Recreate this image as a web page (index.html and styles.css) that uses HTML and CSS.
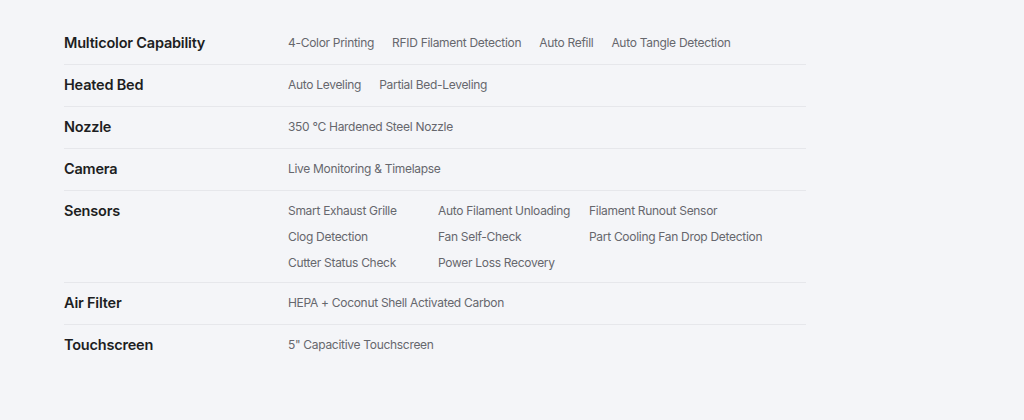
FILE: index.html
```html
<!DOCTYPE html>
<html>
<head>
    <title>Specs</title>
    <link rel="stylesheet" href="styles.css">
</head>
<body>
    <div class="specs">
        <div class="spec-row">
            <div class="spec-label">Multicolor Capability</div>
            <div class="spec-values">
                <span>4-Color Printing</span>
                <span>RFID Filament Detection</span>
                <span>Auto Refill</span>
                <span>Auto Tangle Detection</span>
            </div>
        </div>
        <div class="spec-row">
            <div class="spec-label">Heated Bed</div>
            <div class="spec-values">
                <span>Auto Leveling</span>
                <span>Partial Bed-Leveling</span>
            </div>
        </div>
        <div class="spec-row">
            <div class="spec-label">Nozzle</div>
            <div class="spec-values">
                <span>350 °C Hardened Steel Nozzle</span>
            </div>
        </div>
        <div class="spec-row">
            <div class="spec-label">Camera</div>
            <div class="spec-values">
                <span>Live Monitoring &amp; Timelapse</span>
            </div>
        </div>
        <div class="spec-row tall">
            <div class="spec-label">Sensors</div>
            <div class="spec-grid">
                <span>Smart Exhaust Grille</span>
                <span>Auto Filament Unloading</span>
                <span>Filament Runout Sensor</span>
                <span>Clog Detection</span>
                <span>Fan Self-Check</span>
                <span>Part Cooling Fan Drop Detection</span>
                <span>Cutter Status Check</span>
                <span>Power Loss Recovery</span>
            </div>
        </div>
        <div class="spec-row">
            <div class="spec-label">Air Filter</div>
            <div class="spec-values">
                <span>HEPA + Coconut Shell Activated Carbon</span>
            </div>
        </div>
        <div class="spec-row last">
            <div class="spec-label">Touchscreen</div>
            <div class="spec-values">
                <span>5" Capacitive Touchscreen</span>
            </div>
        </div>
    </div>
</body>
</html>
```

FILE: styles.css
```css
body {
    margin: 0;
    background-color: #f4f5f8;
    font-family: Inter, "Noto Sans", sans-serif;
    height: 420px;
}
.specs {
    width: 742px;
    margin-left: 64px;
    padding-top: 23px;
}
.spec-row {
    display: flex;
    align-items: flex-start;
    padding: 12px 0 13px;
    border-bottom: 1px solid #e6e7eb;
}
.spec-row.tall {
    padding-bottom: 11px;
}
.spec-row.last {
    border-bottom: none;
}
.spec-label {
    width: 224px;
    flex-shrink: 0;
    font-size: 14.5px;
    font-weight: 600;
    color: #1d1e22;
    line-height: 16px;
    letter-spacing: -0.2px;
}
.spec-values {
    display: flex;
    gap: 18px;
    font-size: 12px;
    line-height: 16px;
    color: #66676d;
    letter-spacing: -0.3px;
}
.spec-grid {
    display: grid;
    grid-template-columns: 150px 151px auto;
    row-gap: 10px;
    font-size: 12px;
    line-height: 16px;
    color: #66676d;
    letter-spacing: -0.3px;
}
```
